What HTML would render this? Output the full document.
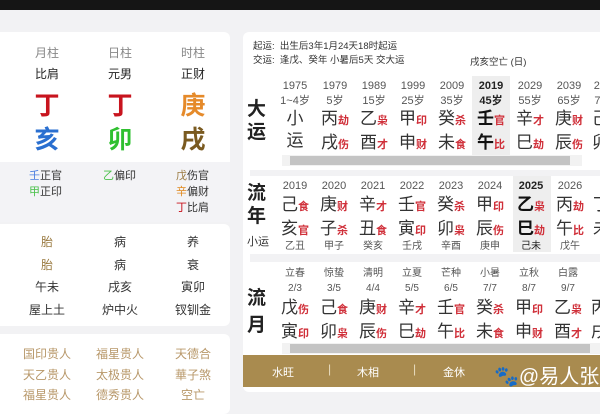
<!DOCTYPE html>
<html><head><meta charset="utf-8"><style>
*{margin:0;padding:0;box-sizing:border-box}
body{width:600px;height:400px;overflow:hidden;background:#f2f2f4;font-family:"Liberation Sans","Noto Sans CJK SC",sans-serif;position:relative;color:#333}
.a{position:absolute;white-space:nowrap}
.c{position:absolute;white-space:nowrap;text-align:center;transform:translateX(-50%)}
.card{position:absolute;background:#fff;border-radius:6px}
s{text-decoration:none;color:#d0303a;font-size:11px;font-weight:bold}
.g{font-size:17px;color:#333}
.y{font-size:11px;color:#555}
.gold{color:#b8986a;font-size:12px}
</style></head><body>
<div class="a" style="left:0;top:0;width:600px;height:10px;background:#151515"></div>
<!-- left -->
<div class="card" style="left:-6px;top:32px;width:236px;height:190px"></div>
<div class="a" style="left:0;top:162px;width:230px;height:60px;background:#f3f3f6"></div>
<div class="c" style="left:47px;top:44px;font-size:12px;color:#888">月柱</div>
<div class="c" style="left:120px;top:44px;font-size:12px;color:#888">日柱</div>
<div class="c" style="left:193px;top:44px;font-size:12px;color:#888">时柱</div>
<div class="c" style="left:47px;top:65px;font-size:12px;color:#222">比肩</div>
<div class="c" style="left:120px;top:65px;font-size:12px;color:#222">元男</div>
<div class="c" style="left:193px;top:65px;font-size:12px;color:#222">正财</div>
<div class="c" style="left:47px;top:86px;font-size:25px;font-weight:bold;color:#c8141e">丁</div>
<div class="c" style="left:120px;top:86px;font-size:25px;font-weight:bold;color:#c8141e">丁</div>
<div class="c" style="left:193px;top:86px;font-size:25px;font-weight:bold;color:#e58a2a">庚</div>
<div class="c" style="left:47px;top:120px;font-size:25px;font-weight:bold;color:#2a6fd0">亥</div>
<div class="c" style="left:120px;top:120px;font-size:25px;font-weight:bold;color:#2fc030">卯</div>
<div class="c" style="left:193px;top:120px;font-size:25px;font-weight:bold;color:#7a5a20">戌</div>
<div class="a" style="left:29px;top:168px;font-size:11px;line-height:16px;color:#333"><span style="color:#4a7de0">壬</span>正官<br><span style="color:#4ac04a">甲</span>正印</div>
<div class="a" style="left:103px;top:168px;font-size:11px;line-height:16px;color:#333"><span style="color:#4ac04a">乙</span>偏印</div>
<div class="a" style="left:176px;top:168px;font-size:11px;line-height:16px;color:#333"><span style="color:#9a7a40">戊</span>伤官<br><span style="color:#e08a20">辛</span>偏财<br><span style="color:#c8141e">丁</span>比肩</div>
<div class="card" style="left:-6px;top:224px;width:236px;height:102px"></div>
<div class="c" style="left:47px;top:231px;font-size:12px;line-height:22.5px;color:#333"><span style="color:#9a7a40">胎</span><br><span style="color:#9a7a40">胎</span><br>午未<br>屋上土</div>
<div class="c" style="left:120px;top:231px;font-size:12px;line-height:22.5px;color:#333">病<br>病<br>戌亥<br>炉中火</div>
<div class="c" style="left:193px;top:231px;font-size:12px;line-height:22.5px;color:#333">养<br>衰<br>寅卯<br>钗钏金</div>
<div class="card" style="left:-6px;top:334px;width:236px;height:80px"></div>
<div class="c gold" style="left:47px;top:344px;line-height:20.5px">国印贵人<br>天乙贵人<br>福星贵人</div>
<div class="c gold" style="left:120px;top:344px;line-height:20.5px">福星贵人<br>太极贵人<br>德秀贵人</div>
<div class="c gold" style="left:193px;top:344px;line-height:20.5px">天德合<br>華子煞<br>空亡</div>
<!-- right -->
<div class="card" style="left:243px;top:32px;width:370px;height:360px"></div>
<div class="a" style="left:253px;top:40px;font-size:9.5px;line-height:14px;color:#333">起运: &nbsp;出生后3年1月24天18时起运<br>交运: &nbsp;逢戊、癸年 小暑后5天 交大运</div>
<div class="a" style="left:470px;top:54px;font-size:9.5px;color:#333">戌亥空亡 (日)</div>
<div class="a" style="left:247px;top:98px;font-size:19px;font-weight:bold;line-height:23px;color:#222">大<br>运</div>
<div class="a" style="left:472px;top:76px;width:38px;height:80px;background:#eeeeee"></div>
<div class="a" style="left:250px;top:170px;width:360px;height:6px;background:#f2f2f4"></div>
<div class="a" style="left:513px;top:176px;width:38px;height:76px;background:#eeeeee"></div>
<div class="a" style="left:250px;top:254px;width:360px;height:8px;background:#f2f2f4"></div>
<div class="a" style="left:247px;top:182px;font-size:19px;font-weight:bold;line-height:23px;color:#222">流<br>年</div>
<div class="a" style="left:247px;top:233px;font-size:11px;color:#333">小运</div>
<div class="a" style="left:247px;top:285px;font-size:19px;font-weight:bold;line-height:27px;color:#222">流<br>月</div>
<div class="a" style="left:282px;top:155px;width:300px;height:11px;background:#f2f2f2"></div>
<div class="a" style="left:290px;top:156px;width:280px;height:9px;background:#c4c4c4"></div>
<div class="a" style="left:282px;top:343px;width:318px;height:11px;background:#f2f2f2"></div>
<div class="a" style="left:290px;top:344px;width:300px;height:9px;background:#c4c4c4"></div>
<div class="a" style="left:243px;top:355px;width:360px;height:32px;background:#a98b4f"></div>
<div class="a" style="left:272px;top:364px;font-size:11px;color:#fff">水旺</div>
<div class="a" style="left:328px;top:362px;font-size:12px;color:#e8dcc0">|</div>
<div class="a" style="left:357px;top:364px;font-size:11px;color:#fff">木相</div>
<div class="a" style="left:413px;top:362px;font-size:12px;color:#e8dcc0">|</div>
<div class="a" style="left:443px;top:364px;font-size:11px;color:#fff">金休</div>
<div class="a" style="left:494px;top:360px;font-size:20px;color:#fff">🐾@易人张</div>

<!-- dayun -->
<div class="c y" style="left:295px;top:79px;line-height:15px">1975<br>1~4岁</div>
<div class="c y" style="left:335px;top:79px;line-height:15px">1979<br>5岁</div>
<div class="c y" style="left:374px;top:79px;line-height:15px">1989<br>15岁</div>
<div class="c y" style="left:413px;top:79px;line-height:15px">1999<br>25岁</div>
<div class="c y" style="left:452px;top:79px;line-height:15px">2009<br>35岁</div>
<div class="c y" style="left:491px;top:79px;line-height:15px;font-weight:bold;color:#222">2019<br>45岁</div>
<div class="c y" style="left:530px;top:79px;line-height:15px">2029<br>55岁</div>
<div class="c y" style="left:569px;top:79px;line-height:15px">2039<br>65岁</div>
<div class="c y" style="left:606px;top:79px;line-height:15px">2049<br>75岁</div>
<div class="c g" style="left:295px;top:108px;line-height:22px">小<br>运</div>
<div class="c g" style="left:335px;top:108px;line-height:22px">丙<s>劫</s><br>戌<s>伤</s></div>
<div class="c g" style="left:374px;top:108px;line-height:22px">乙<s>枭</s><br>酉<s>才</s></div>
<div class="c g" style="left:413px;top:108px;line-height:22px">甲<s>印</s><br>申<s>财</s></div>
<div class="c g" style="left:452px;top:108px;line-height:22px">癸<s>杀</s><br>未<s>食</s></div>
<div class="c g" style="left:491px;top:108px;line-height:22px;font-weight:bold;color:#111">壬<s>官</s><br>午<s>比</s></div>
<div class="c g" style="left:530px;top:108px;line-height:22px">辛<s>才</s><br>巳<s>劫</s></div>
<div class="c g" style="left:569px;top:108px;line-height:22px">庚<s>财</s><br>辰<s>伤</s></div>
<div class="c g" style="left:606px;top:108px;line-height:22px">己<s>食</s><br>卯<s>枭</s></div>
<!-- liunian -->
<div class="c y" style="left:295px;top:180px">2019</div>
<div class="c y" style="left:334px;top:180px">2020</div>
<div class="c y" style="left:373px;top:180px">2021</div>
<div class="c y" style="left:412px;top:180px">2022</div>
<div class="c y" style="left:451px;top:180px">2023</div>
<div class="c y" style="left:490px;top:180px">2024</div>
<div class="c y" style="left:531px;top:180px;font-weight:bold;color:#222">2025</div>
<div class="c y" style="left:570px;top:180px">2026</div>
<div class="c g" style="left:295px;top:194px;line-height:22px">己<s>食</s><br>亥<s>官</s></div>
<div class="c g" style="left:334px;top:194px;line-height:22px">庚<s>财</s><br>子<s>杀</s></div>
<div class="c g" style="left:373px;top:194px;line-height:22px">辛<s>才</s><br>丑<s>食</s></div>
<div class="c g" style="left:412px;top:194px;line-height:22px">壬<s>官</s><br>寅<s>印</s></div>
<div class="c g" style="left:451px;top:194px;line-height:22px">癸<s>杀</s><br>卯<s>枭</s></div>
<div class="c g" style="left:490px;top:194px;line-height:22px">甲<s>印</s><br>辰<s>伤</s></div>
<div class="c g" style="left:531px;top:194px;line-height:22px;font-weight:bold;color:#111">乙<s>枭</s><br>巳<s>劫</s></div>
<div class="c g" style="left:570px;top:194px;line-height:22px">丙<s>劫</s><br>午<s>比</s></div>
<div class="c g" style="left:607px;top:194px;line-height:22px">丁<s>比</s><br>未<s>食</s></div>
<div class="c y" style="left:295px;top:237px;font-size:10px">乙丑</div>
<div class="c y" style="left:334px;top:237px;font-size:10px">甲子</div>
<div class="c y" style="left:373px;top:237px;font-size:10px">癸亥</div>
<div class="c y" style="left:412px;top:237px;font-size:10px">壬戌</div>
<div class="c y" style="left:451px;top:237px;font-size:10px">辛酉</div>
<div class="c y" style="left:490px;top:237px;font-size:10px">庚申</div>
<div class="c y" style="left:531px;top:237px;font-size:10px;color:#222">己未</div>
<div class="c y" style="left:570px;top:237px;font-size:10px">戊午</div>
<!-- liuyue -->
<div class="c y" style="left:295px;top:266px;line-height:15px;font-size:10px">立春<br>2/3</div>
<div class="c y" style="left:334px;top:266px;line-height:15px;font-size:10px">惊蛰<br>3/5</div>
<div class="c y" style="left:373px;top:266px;line-height:15px;font-size:10px">清明<br>4/4</div>
<div class="c y" style="left:412px;top:266px;line-height:15px;font-size:10px">立夏<br>5/5</div>
<div class="c y" style="left:451px;top:266px;line-height:15px;font-size:10px">芒种<br>6/5</div>
<div class="c y" style="left:490px;top:266px;line-height:15px;font-size:10px">小暑<br>7/7</div>
<div class="c y" style="left:529px;top:266px;line-height:15px;font-size:10px">立秋<br>8/7</div>
<div class="c y" style="left:568px;top:266px;line-height:15px;font-size:10px">白露<br>9/7</div>
<div class="c g" style="left:295px;top:297px;line-height:22px">戊<s>伤</s><br>寅<s>印</s></div>
<div class="c g" style="left:334px;top:297px;line-height:22px">己<s>食</s><br>卯<s>枭</s></div>
<div class="c g" style="left:373px;top:297px;line-height:22px">庚<s>财</s><br>辰<s>伤</s></div>
<div class="c g" style="left:412px;top:297px;line-height:22px">辛<s>才</s><br>巳<s>劫</s></div>
<div class="c g" style="left:451px;top:297px;line-height:22px">壬<s>官</s><br>午<s>比</s></div>
<div class="c g" style="left:490px;top:297px;line-height:22px">癸<s>杀</s><br>未<s>食</s></div>
<div class="c g" style="left:529px;top:297px;line-height:22px">甲<s>印</s><br>申<s>财</s></div>
<div class="c g" style="left:568px;top:297px;line-height:22px">乙<s>枭</s><br>酉<s>才</s></div>
<div class="c g" style="left:605px;top:297px;line-height:22px">丙<s>劫</s><br>戌<s>伤</s></div>
</body></html>
